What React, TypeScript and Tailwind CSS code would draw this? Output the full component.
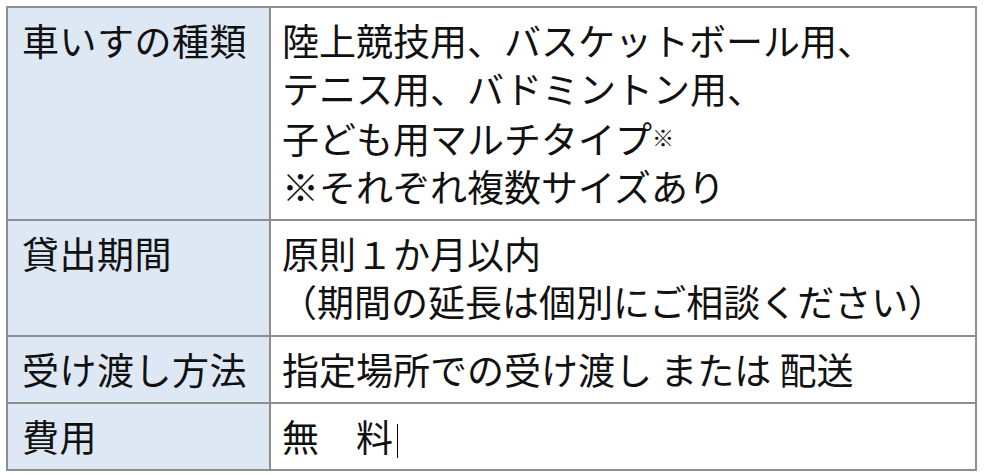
export default function App() {
  const font = { fontFamily: '"Noto Sans CJK JP", "Noto Sans", sans-serif' }
  const th = "border-2 border-[#8e8e8e] bg-[#dde8f4] pl-[14px] pr-2 pt-[8px] pb-[9px] align-top text-left font-normal tracking-[0.5px]"
  const td = "border-2 border-[#8e8e8e] bg-white pl-[11px] pr-2 pt-[8px] pb-[9px] align-top"

  return (
    <div className="min-h-screen bg-white" style={font}>
      <div className="pt-[6px] pl-[6px]">
        <table className="w-[971px] border-collapse text-[37px] leading-[48px] text-[#111]">
          <tbody>
            <tr>
              <th className={`${th} w-[263px]`}>車いすの種類</th>
              <td className={td}>
                <div>陸上競技用、バスケットボール用、</div>
                <div>テニス用、バドミントン用、</div>
                <div>
                  子ども用マルチタイプ
                  <span className="text-[22px] align-[8px]">※</span>
                </div>
                <div>※それぞれ複数サイズあり</div>
              </td>
            </tr>
            <tr>
              <th className={th}>貸出期間</th>
              <td className={`${td} pb-[10px]`}>
                <div>原則１か月以内</div>
                <div className="-ml-[2px]">（期間の延長は個別にご相談ください）</div>
              </td>
            </tr>
            <tr>
              <th className={th}>受け渡し方法</th>
              <td className={td}>指定場所での受け渡し または 配送</td>
            </tr>
            <tr>
              <th className={th}>費用</th>
              <td className={td}>
                <span>無　料</span>
                <span className="ml-[4px] inline-block h-[34px] w-px bg-black align-[-6px]" />
              </td>
            </tr>
          </tbody>
        </table>
      </div>
    </div>
  )
}
